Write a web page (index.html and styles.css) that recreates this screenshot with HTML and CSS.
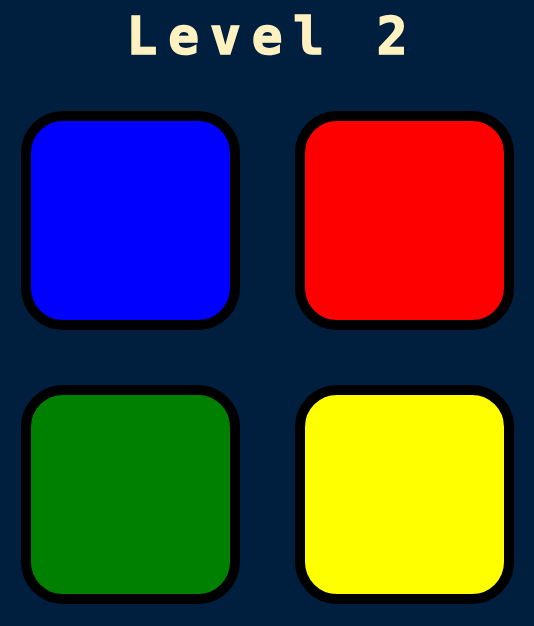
FILE: index.html
```html
<!DOCTYPE html>
<html>
<head>
<meta charset="utf-8">
<link rel="stylesheet" href="styles.css">
</head>
<body>
<main class="game">
  <h1 class="title">Level 2</h1>
  <div class="board">
    <div class="pad pad-blue"></div>
    <div class="pad pad-red"></div>
    <div class="pad pad-green"></div>
    <div class="pad pad-yellow"></div>
  </div>
</main>
</body>
</html>
```
FILE: styles.css
```css
html, body {
  margin: 0;
  padding: 0;
  background: #001f3f;
  height: 100%;
  overflow: hidden;
}
.game {
  display: flex;
  flex-direction: column;
  align-items: center;
}
.title {
  margin: 9px 0 0 0;
  height: 102px;
  font-family: "DejaVu Sans Mono", "Liberation Mono", monospace;
  font-weight: bold;
  font-size: 51px;
  line-height: 56px;
  letter-spacing: 11px;
  padding-left: 11px;
  color: #fff2c0;
  -webkit-text-stroke: 1.5px #fff2c0;
}
.board {
  display: grid;
  grid-template-columns: 219px 219px;
  grid-auto-rows: 219px;
  column-gap: 55px;
  row-gap: 55px;
}
.pad {
  box-sizing: border-box;
  border: 10px solid #000;
  border-radius: 42px;
}
.pad-blue { background: #0000ff; }
.pad-red { background: #ff0000; }
.pad-green { background: #008000; }
.pad-yellow { background: #ffff00; }
```
